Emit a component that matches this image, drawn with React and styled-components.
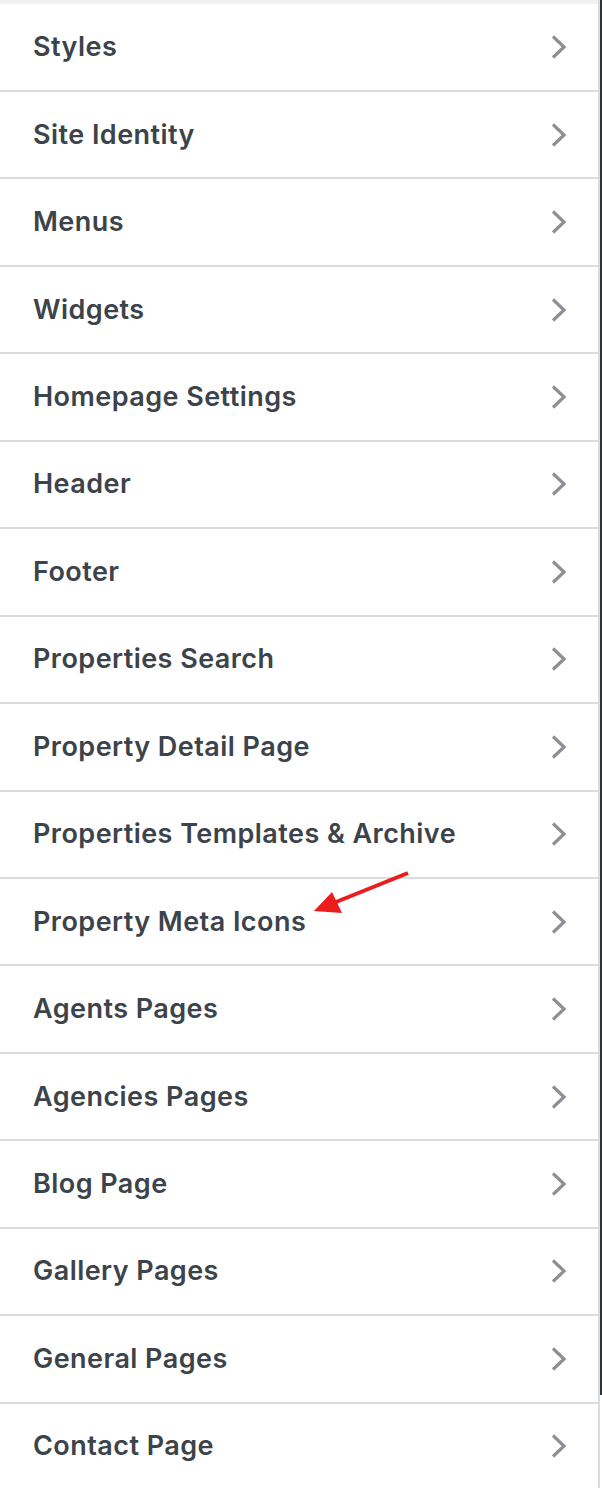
import React from "react";
import styled, { createGlobalStyle } from "styled-components";

const sections = [
  "Styles",
  "Site Identity",
  "Menus",
  "Widgets",
  "Homepage Settings",
  "Header",
  "Footer",
  "Properties Search",
  "Property Detail Page",
  "Properties Templates & Archive",
  "Property Meta Icons",
  "Agents Pages",
  "Agencies Pages",
  "Blog Page",
  "Gallery Pages",
  "General Pages",
  "Contact Page",
];

const GlobalStyle = createGlobalStyle`
  html, body {
    margin: 0;
    padding: 0;
    background: #fff;
  }
  body {
    font-family: Inter, "Liberation Sans", sans-serif;
  }
`;

const App = () => {
  return (
    <>
      <GlobalStyle />
      <Page>
        <Panel>
          <TopStrip />
          <List>
            {sections.map((title) => (
              <Item key={title}>
                <Label>{title}</Label>
                <Chevron />
                {title === "Property Meta Icons" && <Pointer />}
              </Item>
            ))}
          </List>
        </Panel>
        <Edge />
      </Page>
    </>
  );
};

const Chevron = () => (
  <ChevronSvg width="18" height="26" viewBox="0 0 18 26">
    <path
      d="M3 2.5 L14 13 L3 23.5"
      fill="none"
      stroke="#8c8f94"
      strokeWidth="3.2"
    />
  </ChevronSvg>
);

// red annotation arrow pointing at the label
const Pointer = () => (
  <ArrowSvg width="104" height="48" viewBox="0 0 104 48">
    <line x1="98" y1="2" x2="26" y2="31" stroke="#ea1c1c" strokeWidth="4" />
    <polygon points="4,40 22,21 32,42" fill="#ea1c1c" />
  </ArrowSvg>
);

const Page = styled.div`
  display: flex;
  width: 602px;
  height: 1488px;
  overflow: hidden;
`;

const Panel = styled.div`
  width: 598px;
  border-right: 2px solid #dcdcde;
  display: flex;
  flex-direction: column;
`;

const Edge = styled.div`
  width: 2px;
  height: 1395px;
  background: #2c3338;
`;

const TopStrip = styled.div`
  flex-shrink: 0;
  height: 3.5px;
  background: #f0f0f1;
`;

const List = styled.ul`
  flex-shrink: 0;
  list-style: none;
  margin: 0;
  padding: 0;
`;

const Item = styled.li`
  position: relative;
  box-sizing: border-box;
  height: 87.44px;
  display: flex;
  align-items: center;
  justify-content: space-between;
  padding: 0 30px 1px 33px;
  border-bottom: 2px solid #dcdcde;
  background: #fff;

  &:first-child {
    height: 88.5px;
  }
`;

const Label = styled.span`
  font-size: 27px;
  font-weight: 600;
  color: #3c434a;
  letter-spacing: 0.45px;
`;

const ChevronSvg = styled.svg`
  display: block;
  margin-top: 1px;
`;

const ArrowSvg = styled.svg`
  position: absolute;
  left: 310px;
  top: -8px;
`;

export default App;
